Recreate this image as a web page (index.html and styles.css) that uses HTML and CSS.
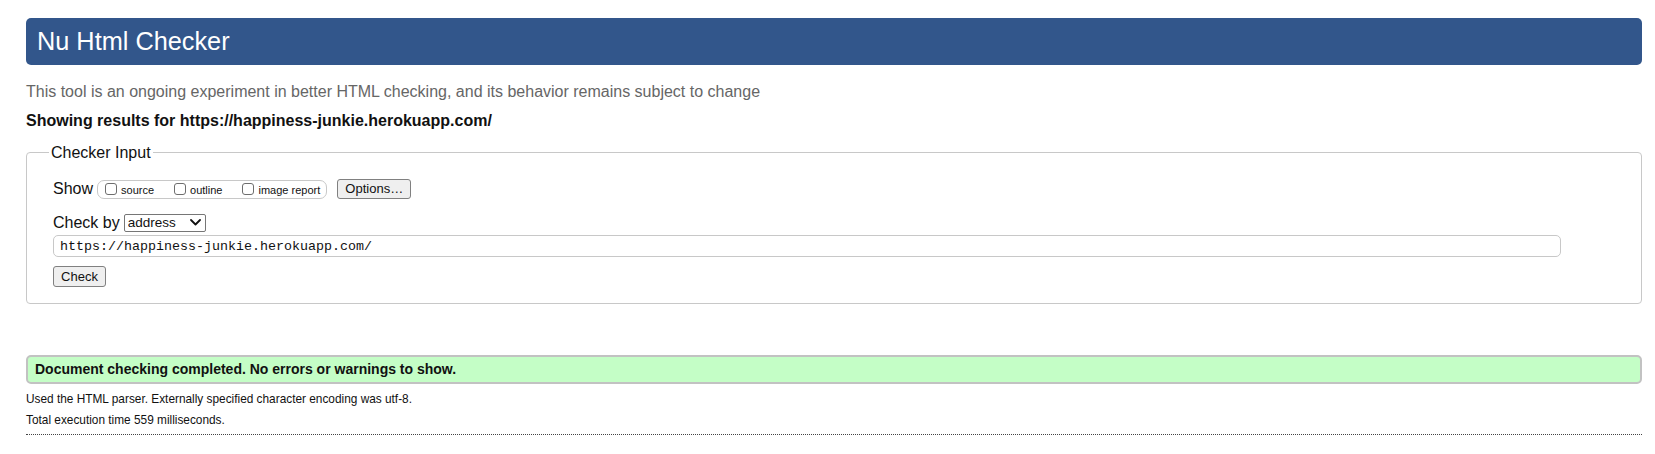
FILE: index.html
```
<!DOCTYPE html>
<html lang="en">
<head>
<meta charset="utf-8">
<title>Nu Html Checker</title>
<link rel="stylesheet" href="styles.css">
</head>
<body>
<h1 class="title">Nu Html Checker</h1>
<p class="about">This tool is an ongoing experiment in better HTML checking, and its behavior remains subject to change</p>
<p class="showing">Showing results for https://happiness-junkie.herokuapp.com/</p>
<fieldset class="input-box">
  <legend class="legend">Checker Input</legend>
  <div class="row row-show">
    <span class="label">Show</span>
    <span class="pill">
      <label class="opt"><input type="checkbox" class="cb"><span>source</span></label>
      <label class="opt"><input type="checkbox" class="cb"><span>outline</span></label>
      <label class="opt"><input type="checkbox" class="cb"><span>image report</span></label>
    </span>
    <button class="btn btn-options" type="button">Options…</button>
  </div>
  <div class="row row-by">
    <span class="label">Check by</span>
    <span class="select-wrap">
      <select class="select"><option>address</option></select>
      <svg class="chev" width="11" height="7" viewBox="0 0 11 7"><path d="M1 1 L5.5 5.5 L10 1" fill="none" stroke="#111" stroke-width="1.8" stroke-linecap="round" stroke-linejoin="round"/></svg>
    </span>
  </div>
  <input class="url" type="text" value="https://happiness-junkie.herokuapp.com/">
  <div class="row row-check">
    <button class="btn btn-check" type="button">Check</button>
  </div>
</fieldset>
<div class="success">Document checking completed. No errors or warnings to show.</div>
<div class="details">
  <p class="detail">Used the HTML parser. Externally specified character encoding was utf-8.</p>
  <p class="detail">Total execution time 559 milliseconds.</p>
</div>
<div class="rule"></div>
</body>
</html>
```
FILE: styles.css
```
html, body {
  margin: 0;
  background: #fff;
}
body {
  padding: 18px 13px 0 26px;
  font-family: "Liberation Sans", Arial, Helvetica, sans-serif;
  color: #111;
}
.title {
  margin: 0;
  height: 47px;
  line-height: 47px;
  padding: 0 11px;
  background: #32568b;
  color: #fff;
  font-size: 25.3px;
  font-weight: normal;
  border-radius: 5px;
}
.about {
  margin: 16.5px 0 0;
  font-size: 16px;
  line-height: 20px;
  color: #666;
}
.showing {
  margin: 10.4px 0 0;
  font-size: 16px;
  line-height: 18px;
  font-weight: bold;
  color: #111;
}
.input-box {
  margin: 15px 0 0;
  padding: 18px 26px 16px 26px;
  border: 1px solid #c8c8c8;
  border-radius: 4px;
  min-width: 0;
}
.legend {
  font-size: 16px;
  line-height: 16px;
  padding: 0 2px;
  margin-left: -4px;
  color: #111;
}
.row {
  display: flex;
  align-items: center;
}
.row-show {
  height: 20px;
}
.label {
  font-size: 16px;
  line-height: 20px;
  margin-right: 4px;
}
.pill {
  display: flex;
  align-items: center;
  height: 17px;
  margin-top: 1px;
  padding: 0 6px 0 7px;
  border: 1px solid #c8c8c8;
  border-radius: 7px;
  gap: 20px;
}
.opt {
  display: flex;
  align-items: center;
  font-size: 11px;
  line-height: 13px;
}
.opt span {
  padding-top: 3px;
}
.cb {
  appearance: none;
  -webkit-appearance: none;
  width: 12px;
  height: 12px;
  margin: 0 4px 0 0;
  border: 1px solid #6e6e6e;
  border-radius: 3px;
  background: #fff;
}
.btn {
  font-family: "Liberation Sans", Arial, Helvetica, sans-serif;
  font-size: 13px;
  color: #111;
  background: #efefef;
  border: 1px solid #808080;
  border-radius: 3px;
  padding: 0 7px;
  margin: 0;
}
.btn-options {
  height: 20px;
  margin-left: 10px;
  width: 74px;
}
.row-by {
  margin-top: 14.7px;
  height: 18px;
}
.select-wrap {
  position: relative;
  display: inline-flex;
}
.select {
  appearance: none;
  -webkit-appearance: none;
  width: 82px;
  height: 18px;
  margin: 0;
  padding: 0 0 0 3px;
  border: 1px solid #767676;
  border-radius: 2px;
  background: #fff;
  font-family: "Liberation Sans", Arial, Helvetica, sans-serif;
  font-size: 13.5px;
  color: #111;
}
.chev {
  position: absolute;
  right: 5px;
  top: 5px;
}
.url {
  display: block;
  box-sizing: border-box;
  width: calc(100% - 54px);
  height: 22.5px;
  margin: 3.3px 0 0;
  padding: 0 6px;
  border: 1px solid #c8c8c8;
  border-radius: 5px;
  font-family: "Liberation Mono", "DejaVu Sans Mono", monospace;
  font-size: 13.33px;
  color: #111;
  background: #fff;
}
.row-check {
  margin-top: 8.7px;
}
.btn-check {
  height: 21px;
  width: 53px;
}
.success {
  margin-top: 51px;
  box-sizing: border-box;
  height: 29px;
  line-height: 25px;
  padding: 0 7px;
  background: #c4fec6;
  border: 2px solid #c2c2c2;
  border-radius: 5px;
  font-size: 14px;
  font-weight: bold;
  color: #111;
}
.details {
  margin-top: 4.9px;
}
.detail {
  margin: 0;
  font-size: 11.85px;
  line-height: 20.6px;
  color: #111;
}
.rule {
  margin-top: 3.7px;
  border-top: 1px dotted #444;
  height: 0;
}
```
